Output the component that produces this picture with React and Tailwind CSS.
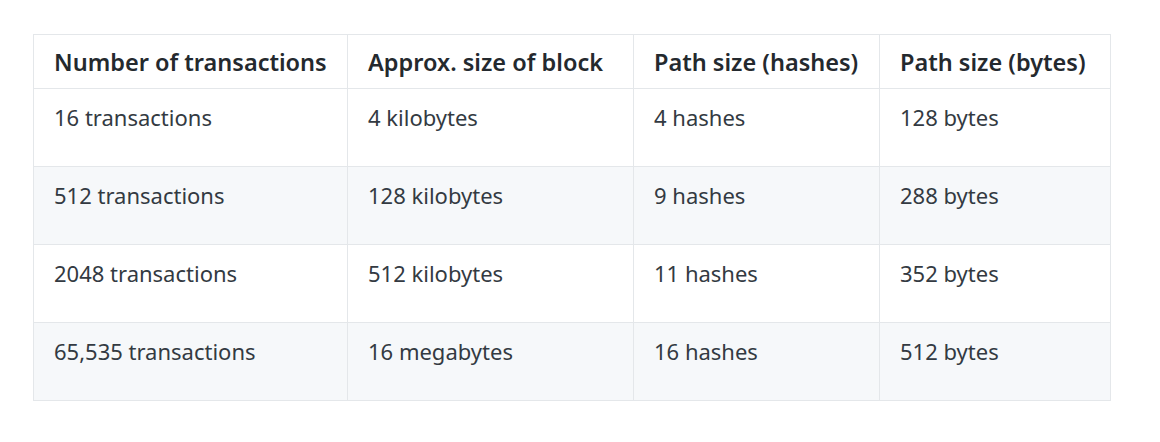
import React from 'react';

const headers = ['Number of transactions', 'Approx. size of block', 'Path size (hashes)', 'Path size (bytes)'];

const rows = [
  ['16 transactions', '4 kilobytes', '4 hashes', '128 bytes'],
  ['512 transactions', '128 kilobytes', '9 hashes', '288 bytes'],
  ['2048 transactions', '512 kilobytes', '11 hashes', '352 bytes'],
  ['65,535 transactions', '16 megabytes', '16 hashes', '512 bytes'],
];

const widths = ['w-[314px]', 'w-[286px]', 'w-[246px]', 'w-[231px]'];

export default function App() {
  return (
    <div className="h-[442px] w-[1160px] bg-white pl-[33px] pt-[34px] font-['Noto_Sans',sans-serif] text-[#24292e]">
      <table className="border-collapse">
        <thead>
          <tr className="h-[54px]">
            {headers.map((h, i) => (
              <th
                key={h}
                className={`${widths[i]} border border-[#e4e7ea] px-[20px] pt-[3px] text-left align-middle text-[23.5px] font-semibold text-[#24292e]`}
              >
                {h}
              </th>
            ))}
          </tr>
        </thead>
        <tbody>
          {rows.map((r, ri) => (
            <tr key={ri} className={`h-[78px] ${ri % 2 === 1 ? 'bg-[#f6f8fa]' : 'bg-white'}`}>
              {r.map((c, ci) => (
                <td
                  key={ci}
                  className="border border-[#e4e7ea] px-[20px] pb-[32px] pt-[12px] align-top text-[22px] leading-[32px] text-[#333a42]"
                >
                  {c}
                </td>
              ))}
            </tr>
          ))}
        </tbody>
      </table>
    </div>
  );
}
